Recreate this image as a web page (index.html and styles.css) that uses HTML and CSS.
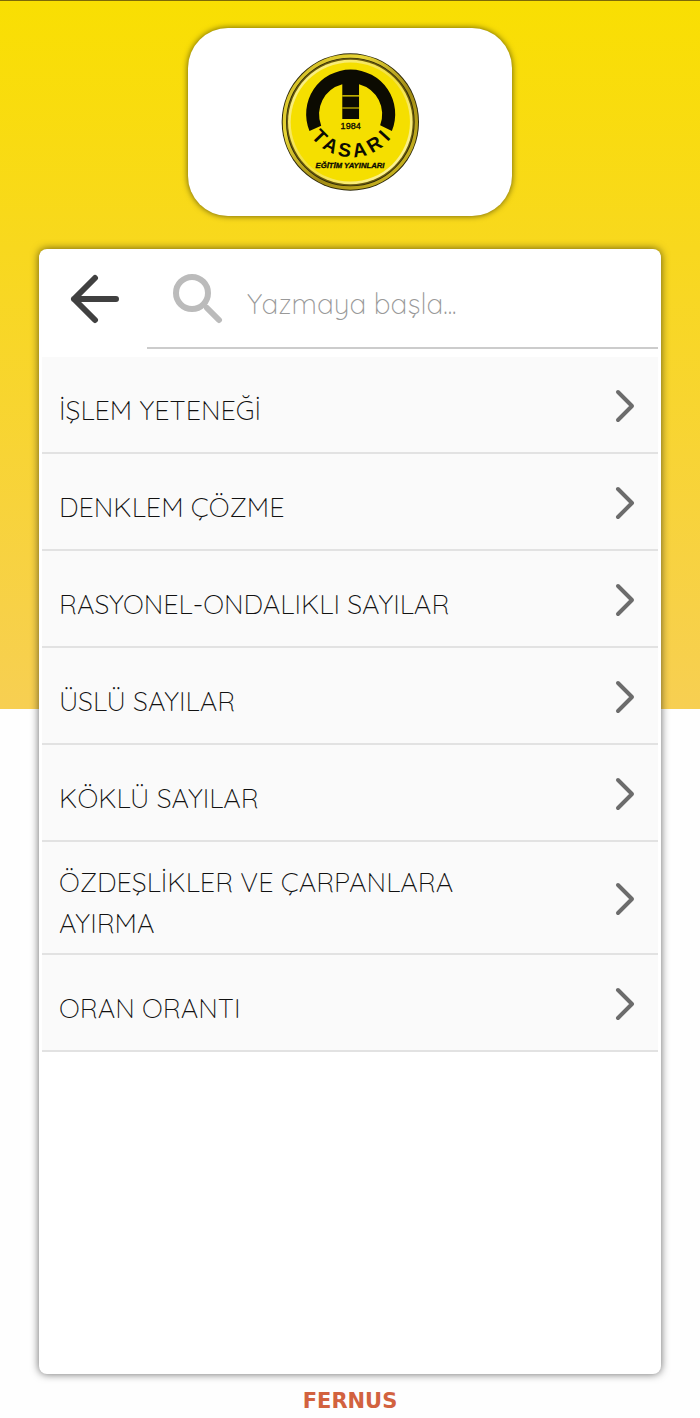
FILE: index.html
```html
<!DOCTYPE html>
<html lang="tr">
<head>
  <meta charset="UTF-8">
  <meta name="viewport" content="width=device-width, initial-scale=1.0">
  <title>Tasarı Eğitim Yayınları</title>
  <link rel="stylesheet" href="styles.css">
</head>
<body>
  <!-- Logo -->
  <header class="logo-card">
    <svg class="logo" viewBox="37 40 412 412" role="img" aria-label="Tasarı Eğitim Yayınları">
      <defs>
        <linearGradient id="rim" x1="0" y1="0" x2="1" y2="1">
          <stop offset="0" stop-color="#c9b21c"/>
          <stop offset="0.3" stop-color="#e8d638"/>
          <stop offset="0.6" stop-color="#a08a14"/>
          <stop offset="1" stop-color="#d8c324"/>
        </linearGradient>
        <linearGradient id="ring" x1="0" y1="0" x2="1" y2="1">
          <stop offset="0" stop-color="#fdf6a0"/>
          <stop offset="0.5" stop-color="#f3e03a"/>
          <stop offset="1" stop-color="#fff9b8"/>
        </linearGradient>
      </defs>
      <circle cx="244" cy="246" r="205" fill="#2c2708"/>
      <circle cx="244" cy="246" r="197" fill="none" stroke="url(#rim)" stroke-width="10"/>
      <circle cx="244" cy="246" r="190" fill="#6b5c0c"/>
      <circle cx="244" cy="246" r="186" fill="url(#ring)"/>
      <circle cx="244" cy="246" r="178" fill="#f5df00"/>
      <path d="M 122 273 A 133 133 0 1 1 368 273 L 333 256 A 93 93 0 0 0 270 133 V 237 H 220 V 133 A 93 93 0 0 0 157 257 Z" fill="#0c0b02"/>
      <path d="M 220 168 H 270 M 220 204 H 270" stroke="#f5df00" stroke-width="3"/>
      <text class="logo-year" x="245" y="266">1984</text>
      <text class="logo-name" x="126 158 205 254 308 355" y="291 323 346 352 340 306" rotate="46 28 9 -10 -31 -48">TASARI</text>
      <text class="logo-tag" x="243" y="382">EĞİTİM YAYINLARI</text>
    </svg>
  </header>

  <main class="panel">
    <!-- Search bar -->
    <div class="toolbar">
      <button class="back-button" type="button" aria-label="Geri">
        <svg width="50" height="50" viewBox="0 0 50 50">
          <path d="M46 25H4M25 4L4 25L25 46" />
        </svg>
      </button>
      <label class="search">
        <svg width="50" height="50" viewBox="0 0 50 50">
          <circle cx="19" cy="19" r="16" />
          <path class="handle" d="M34 34L46 46" />
          <path class="neck" d="M30 30L36 36" />
        </svg>
        <input class="search-input" type="text" placeholder="Yazmaya başla..." aria-label="Ara">
      </label>
    </div>

    <!-- Topics -->
    <ul class="topics">
      <li><a class="topic" href="#"><span>İŞLEM YETENEĞİ</span><svg class="chevron" viewBox="0 0 20 34"><path d="M3 3L17 17L3 31"/></svg></a></li>
      <li><a class="topic" href="#"><span>DENKLEM ÇÖZME</span><svg class="chevron" viewBox="0 0 20 34"><path d="M3 3L17 17L3 31"/></svg></a></li>
      <li><a class="topic" href="#"><span>RASYONEL-ONDALIKLI SAYILAR</span><svg class="chevron" viewBox="0 0 20 34"><path d="M3 3L17 17L3 31"/></svg></a></li>
      <li><a class="topic" href="#"><span>ÜSLÜ SAYILAR</span><svg class="chevron" viewBox="0 0 20 34"><path d="M3 3L17 17L3 31"/></svg></a></li>
      <li><a class="topic" href="#"><span>KÖKLÜ SAYILAR</span><svg class="chevron" viewBox="0 0 20 34"><path d="M3 3L17 17L3 31"/></svg></a></li>
      <li><a class="topic" href="#"><span>ÖZDEŞLİKLER VE ÇARPANLARA AYIRMA</span><svg class="chevron" viewBox="0 0 20 34"><path d="M3 3L17 17L3 31"/></svg></a></li>
      <li><a class="topic" href="#"><span>ORAN ORANTI</span><svg class="chevron" viewBox="0 0 20 34"><path d="M3 3L17 17L3 31"/></svg></a></li>
    </ul>
  </main>

  <footer class="brand">FERNUS</footer>
</body>
</html>
```
FILE: styles.css
```css
* {
  box-sizing: border-box;
  margin: 0;
  padding: 0;
}

body {
  font-family: Quicksand, Lato, sans-serif;
  font-weight: 300;
  min-height: 100vh;
  display: flex;
  flex-direction: column;
  padding: 27px 39px 0;
  border-top: 1px solid #7d6a08;
  background: #fefefe linear-gradient(#f9df02, #f8d81e 35%, #f7cf52) no-repeat;
  background-size: 100% 50vh;
}

/* Logo */
.logo-card {
  align-self: center;
  display: flex;
  justify-content: center;
  width: 52%;
  padding: 25px 0;
  border-radius: 40px;
  background: #fff;
  box-shadow: 0 0 6px rgba(0, 0, 0, 0.6);
}

.logo {
  width: 138px;
  height: 138px;
}

.logo-year,
.logo-name,
.logo-tag {
  font-family: "Liberation Sans", sans-serif;
  fill: #0c0b02;
}

.logo-year,
.logo-tag {
  text-anchor: middle;
  stroke: #0c0b02;
}

.logo-year {
  font-size: 27px;
  font-weight: 400;
}

.logo-name {
  font-size: 58px;
  font-weight: 700;
}

.logo-tag {
  font-size: 23px;
  font-weight: 700;
  font-style: italic;
}

/* Panel */
.panel {
  flex: 1;
  margin-top: 33px;
  padding: 0 3px;
  border-radius: 8px;
  background: #fff;
  box-shadow: 0 0 8px rgba(0, 0, 0, 0.6);
}

.toolbar {
  display: flex;
  height: 100px;
  margin-bottom: 8px;
}

.toolbar svg {
  flex: none;
  fill: none;
  stroke-linecap: round;
  stroke-linejoin: round;
}

.back-button {
  width: 105px;
  border: none;
  background: none;
  cursor: pointer;
}

.back-button svg {
  display: block;
  margin: 0 auto;
  stroke: #404040;
  stroke-width: 6;
}

.search {
  flex: 1;
  display: flex;
  align-items: center;
  gap: 24px;
  padding: 2px 0 0 26px;
  border-bottom: 2px solid #ccc;
}

.search svg {
  stroke: #bbb;
  stroke-width: 6;
}

.search .neck {
  stroke-width: 3;
}

.search-input {
  flex: 1;
  min-width: 0;
  height: 60px;
  padding-top: 8px;
  border: none;
  outline: none;
  background: none;
  font: inherit;
  font-size: 28px;
  color: #333;
}

.search-input::placeholder {
  color: #999;
}

/* Topics */
.topics {
  list-style: none;
}

.topic {
  display: flex;
  align-items: center;
  justify-content: space-between;
  min-height: 97px;
  padding: 20px 23px 9px 17px;
  border-bottom: 2px solid #e2e2e2;
  background: #fafafa;
  font-size: 27px;
  line-height: 41px;
  color: #111;
  text-decoration: none;
}

.topic span {
  max-width: 440px;
}

.chevron {
  flex: none;
  width: 20px;
  height: 34px;
  margin-bottom: 9px;
  fill: none;
  stroke: #6c6c6c;
  stroke-width: 4;
  stroke-linecap: round;
  stroke-linejoin: round;
}

.brand {
  padding: 21px 0 11px;
  font-family: "DejaVu Sans", sans-serif;
  font-size: 21px;
  font-weight: 700;
  line-height: 12px;
  text-align: center;
  color: #d2623f;
}
```
